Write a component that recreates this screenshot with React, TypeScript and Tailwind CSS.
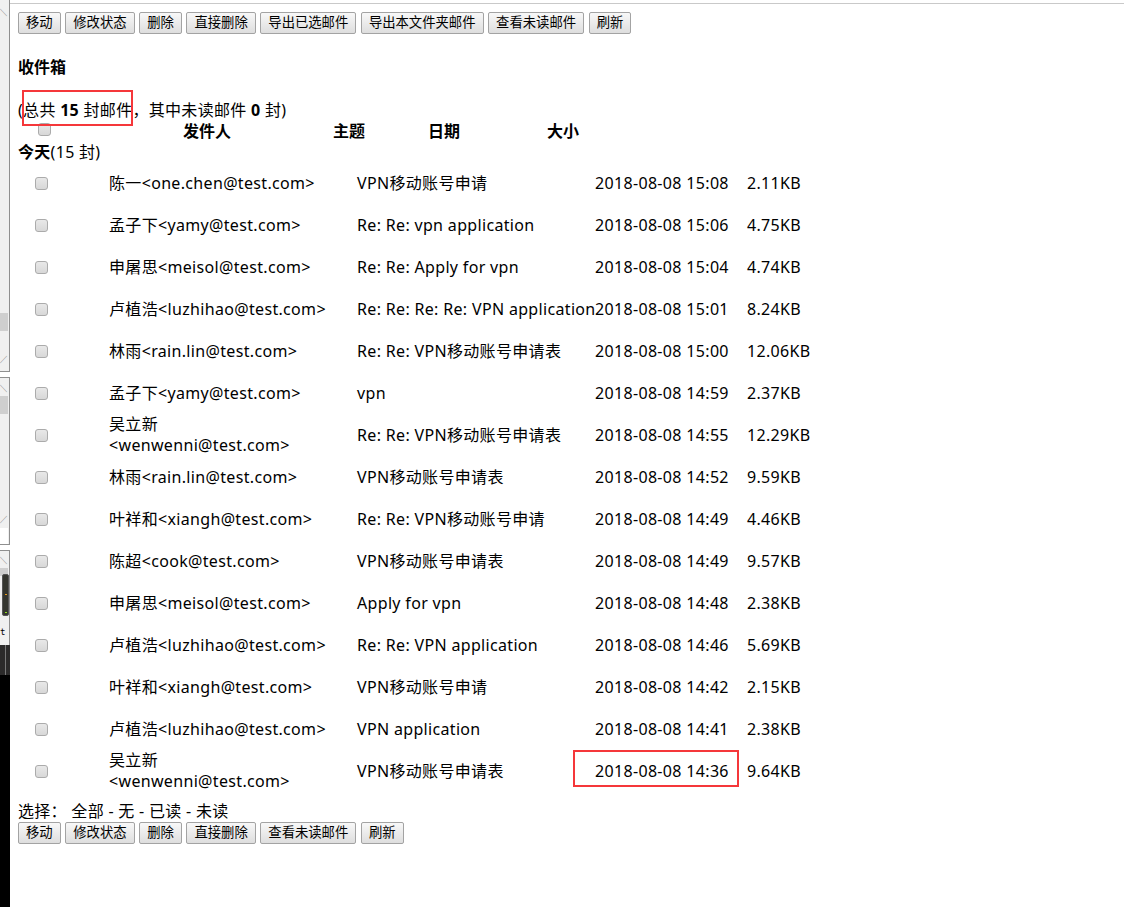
import React from "react";

const rows = [
  { sender: "陈一<one.chen@test.com>", subject: "VPN移动账号申请", date: "2018-08-08 15:08", size: "2.11KB" },
  { sender: "孟子下<yamy@test.com>", subject: "Re: Re: vpn application", date: "2018-08-08 15:06", size: "4.75KB" },
  { sender: "申屠思<meisol@test.com>", subject: "Re: Re: Apply for vpn", date: "2018-08-08 15:04", size: "4.74KB" },
  { sender: "卢植浩<luzhihao@test.com>", subject: "Re: Re: Re: Re: VPN application", date: "2018-08-08 15:01", size: "8.24KB" },
  { sender: "林雨<rain.lin@test.com>", subject: "Re: Re: VPN移动账号申请表", date: "2018-08-08 15:00", size: "12.06KB" },
  { sender: "孟子下<yamy@test.com>", subject: "vpn", date: "2018-08-08 14:59", size: "2.37KB" },
  { sender: "吴立新", sender2: "<wenwenni@test.com>", subject: "Re: Re: VPN移动账号申请表", date: "2018-08-08 14:55", size: "12.29KB" },
  { sender: "林雨<rain.lin@test.com>", subject: "VPN移动账号申请表", date: "2018-08-08 14:52", size: "9.59KB" },
  { sender: "叶祥和<xiangh@test.com>", subject: "Re: Re: VPN移动账号申请", date: "2018-08-08 14:49", size: "4.46KB" },
  { sender: "陈超<cook@test.com>", subject: "VPN移动账号申请表", date: "2018-08-08 14:49", size: "9.57KB" },
  { sender: "申屠思<meisol@test.com>", subject: "Apply for vpn", date: "2018-08-08 14:48", size: "2.38KB" },
  { sender: "卢植浩<luzhihao@test.com>", subject: "Re: Re: VPN application", date: "2018-08-08 14:46", size: "5.69KB" },
  { sender: "叶祥和<xiangh@test.com>", subject: "VPN移动账号申请", date: "2018-08-08 14:42", size: "2.15KB" },
  { sender: "卢植浩<luzhihao@test.com>", subject: "VPN application", date: "2018-08-08 14:41", size: "2.38KB" },
  { sender: "吴立新", sender2: "<wenwenni@test.com>", subject: "VPN移动账号申请表", date: "2018-08-08 14:36", size: "9.64KB", marked: true },
];

function Btn({ label }: { label: string }) {
  return (
    <button className="h-[22px] px-[7px] border border-[#a3a3a3] rounded-[2px] bg-gradient-to-b from-[#f8f8f8] to-[#dedede] text-[13.333px] leading-none text-black">
      {label}
    </button>
  );
}

function Box() {
  return <span className="block w-[13px] h-[13px] rounded-[3px] border border-[#ababab] bg-gradient-to-b from-[#e8e8e8] to-[#d8d8d8]" />;
}

function SideStrip() {
  return (
    <div className="w-[10px] h-full flex flex-col shrink-0 relative">
      <div className="h-[372px] bg-[#f0f0f0] border-r border-b border-[#8f8f8f] relative">
        <span className="absolute left-0 top-[9px] text-[7px] leading-none text-[#666]">╲</span>
        <div className="absolute left-0 top-[313px] w-[8px] h-[18px] bg-[#cfcfcf]" />
        <span className="absolute left-0 top-[356px] text-[7px] leading-none text-[#666]">╱</span>
      </div>
      <div className="h-[5px] bg-white" />
      <div className="h-[168px] bg-[#f0f0f0] border border-l-0 border-[#8f8f8f] relative">
        <span className="absolute left-0 top-[7px] text-[7px] leading-none text-[#666]">╲</span>
        <div className="absolute left-0 top-[18px] w-[8px] h-[18px] bg-[#cfcfcf]" />
        <span className="absolute left-0 top-[138px] text-[7px] leading-none text-[#666]">╱</span>
        <div className="absolute left-0 top-[150px] w-[8px] h-[16px] bg-white" />
      </div>
      <div className="h-[5px] bg-white" />
      <div className="h-[95px] bg-[#f0f0f0] border-t border-r border-[#8f8f8f] relative">
        <span className="absolute left-0 top-[6px] text-[7px] leading-none text-[#666]">╲</span>
        <div className="absolute left-0 top-[17px] w-[8px] h-[8px] bg-[#cfcfcf]" />
        <div className="absolute left-[2px] top-[23px] w-[7px] h-[42px] rounded-[2px] bg-[#34352f] border border-[#555]">
          <div className="absolute left-[2px] top-[19px] w-[2px] h-[1px] bg-[#e89a1a]" />
          <div className="absolute left-[2px] top-[37px] w-[2px] h-[1px] bg-[#8ee01c]" />
        </div>
        <span className="absolute left-0 top-[77px] text-[9px] leading-none text-black font-['DejaVu_Sans_Mono']">t</span>
      </div>
      <div className="h-[30px] bg-[#2b2a2a] relative">
        <div className="absolute left-[5px] top-0 w-px h-full bg-[#777]" />
      </div>
      <div className="flex-1 bg-black" />
    </div>
  );
}

export default function App() {
  return (
    <div className="w-[1124px] h-[907px] bg-white flex overflow-hidden text-black font-['Noto_Sans','Noto_Sans_CJK_SC',sans-serif]">
      <SideStrip />
      <div className="flex-1 flex flex-col">
        <div className="h-[3px] bg-white" />
        <div className="border-t border-[#c9c9c9] pl-[8px] flex flex-col">
          <div className="mt-[8px] flex gap-[4.6px]">
            {["移动", "修改状态", "删除", "直接删除", "导出已选邮件", "导出本文件夹邮件", "查看未读邮件", "刷新"].map((b) => (
              <Btn key={b} label={b} />
            ))}
          </div>
          <div className="mt-[23px] h-[21px] leading-[21px] text-[16px] font-bold">收件箱</div>
          <div className="mt-[22px] h-[20px] leading-[20px] text-[16px] tracking-[0.3px] relative">
            (总共 <b>15</b> 封邮件，其中未读邮件 <b>0</b> 封)
            <div className="absolute left-[4px] top-[-10px] w-[111px] h-[36px] border-2 border-[#f5373a]" />
          </div>
          <div className="h-[22px] flex items-center text-[16px] font-bold">
            <div className="w-[20px]" />
            <div className="mt-[-4px]"><Box /></div>
            <div className="ml-[132px]">发件人</div>
            <div className="ml-[102px]">主题</div>
            <div className="ml-[63px]">日期</div>
            <div className="ml-[87px]">大小</div>
          </div>
          <div className="h-[20px] leading-[20px] text-[16px] tracking-[0.3px]">
            <b>今天</b>(15 封)
          </div>
          <div className="flex flex-col text-[16px] tracking-[0.33px]">
            {rows.map((r, i) => (
              <div key={i} className="h-[42px] flex items-center">
                <div className="w-[91px] pl-[17px]"><Box /></div>
                <div className="w-[248px] leading-[21px]">
                  <div>{r.sender}</div>
                  {r.sender2 && <div>{r.sender2}</div>}
                </div>
                <div className="w-[238px] whitespace-nowrap">{r.subject}</div>
                <div className="w-[152px] whitespace-nowrap relative">
                  {r.date}
                  {r.marked && <div className="absolute left-[-22px] top-[-9px] w-[166px] h-[37px] border-2 border-[#f5373a]" />}
                </div>
                <div>{r.size}</div>
              </div>
            ))}
          </div>
          <div className="mt-[9px] h-[20px] leading-[20px] text-[16px] tracking-[0.3px] whitespace-pre">
            选择： 全部 - 无 - 已读 - 未读
          </div>
          <div className="mt-[1px] flex gap-[4.6px]">
            {["移动", "修改状态", "删除", "直接删除", "查看未读邮件", "刷新"].map((b) => (
              <Btn key={b} label={b} />
            ))}
          </div>
        </div>
      </div>
    </div>
  );
}
